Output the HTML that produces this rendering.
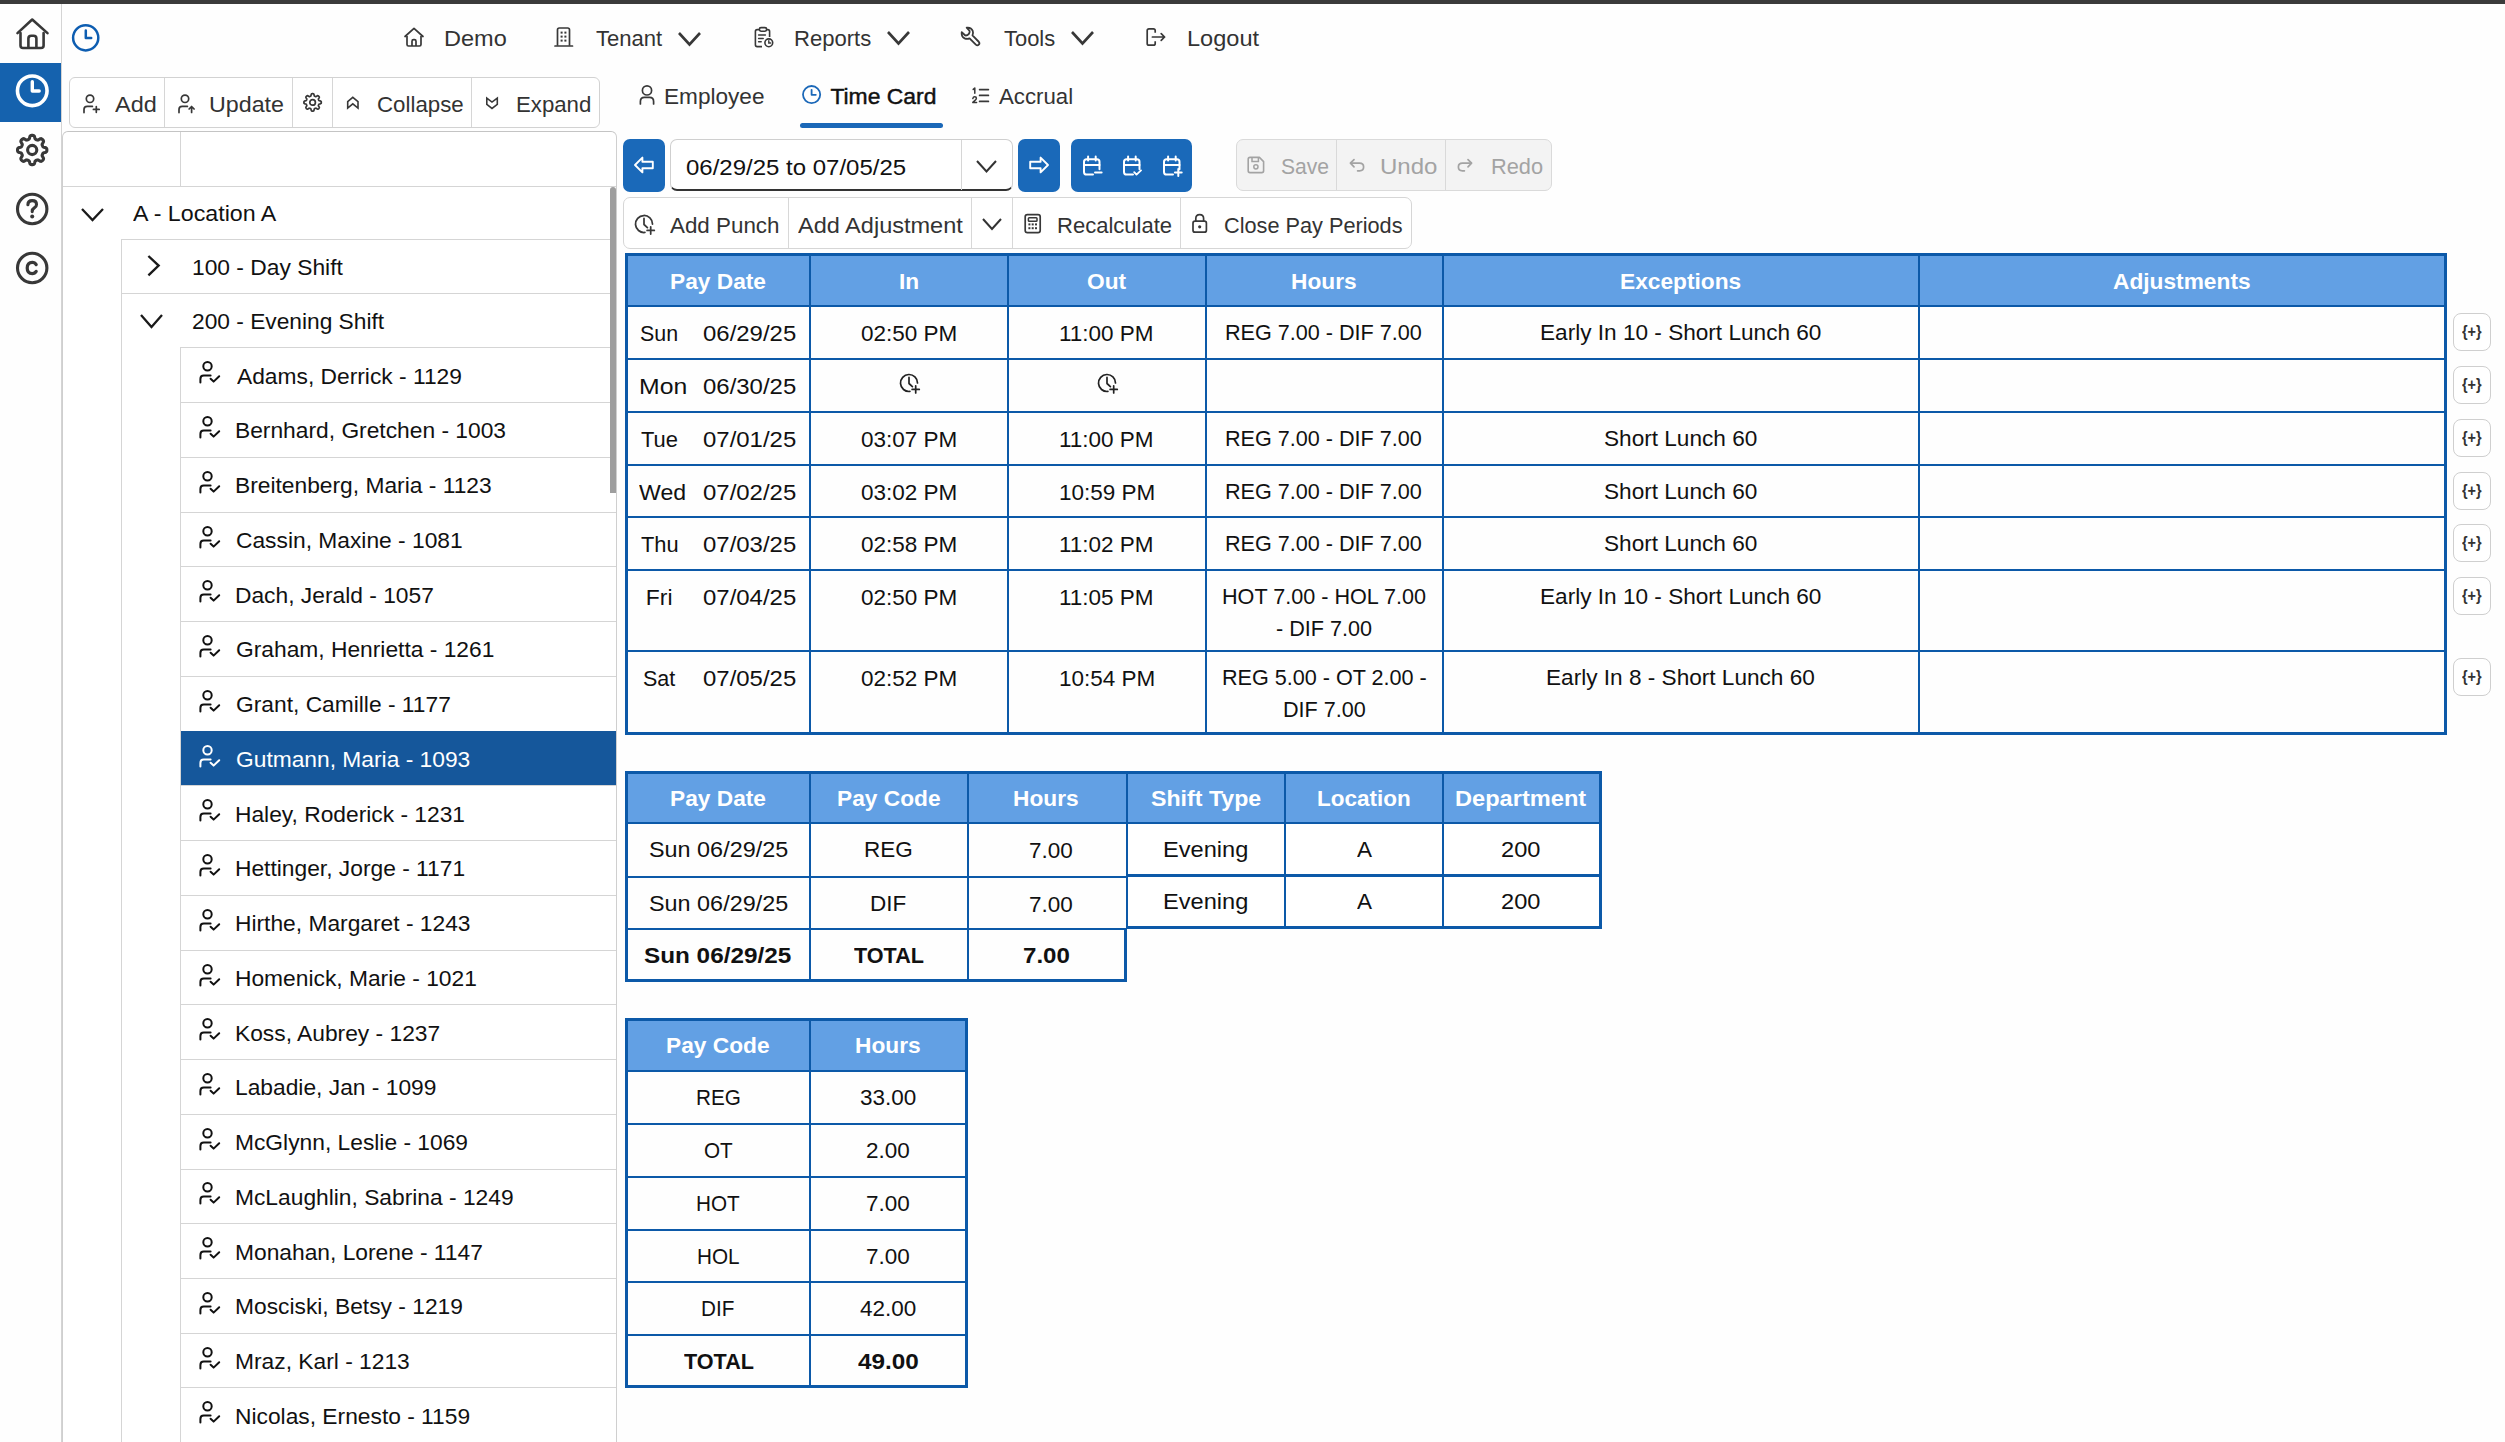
<!DOCTYPE html>
<html><head><meta charset="utf-8"><style>
html,body{margin:0;padding:0;width:2505px;height:1442px;overflow:hidden;background:#fefefe;font-family:"Liberation Sans", sans-serif;}
body{position:relative;}
</style></head><body>
<div style="position:absolute;left:0px;top:0px;width:2505px;height:4px;background:#3b3b3b;"></div>
<div style="position:absolute;left:61px;top:4px;width:1px;height:1438px;background:#d4d4d4;"></div>
<div style="position:absolute;left:0px;top:63px;width:61px;height:59px;background:#1562ae;"></div>
<svg style="position:absolute;left:14px;top:15px;" width="36" height="36" viewBox="0 0 36 36" fill="none"><path d="M3.5 18.1 L18.2 4.5 L33.5 18.1" stroke="#383838" stroke-width="2.6" stroke-linecap="round" stroke-linejoin="round"/><path d="M6.5 18 V30.5 Q6.5 33 9 33 H27 Q29.6 33 29.6 30.5 V18" stroke="#383838" stroke-width="2.6" stroke-linecap="round" stroke-linejoin="round"/><path d="M14.4 33 V23.5 Q14.4 20.7 17.2 20.7 H19.6 Q22.4 20.7 22.4 23.5 V33" stroke="#383838" stroke-width="2.6" stroke-linejoin="round"/></svg>
<svg style="position:absolute;left:14px;top:73px;" width="36" height="36" viewBox="0 0 36 36" fill="none"><circle cx="18.25" cy="17.8" r="14.8" stroke="#fff" stroke-width="3.6"/><path d="M18.3 8.8 V18 H25.2" stroke="#fff" stroke-width="3.4" stroke-linecap="round" stroke-linejoin="round"/></svg>
<svg style="position:absolute;left:14px;top:132px;" width="36" height="36" viewBox="0 0 36 36" fill="none"><path d="M32.85 18.00 L32.83 18.57 L32.75 19.15 L32.54 19.70 L31.99 20.18 L30.85 20.52 L29.71 20.76 L29.13 21.08 L28.86 21.46 L28.67 21.86 L28.50 22.27 L28.34 22.67 L28.18 23.09 L28.11 23.55 L28.29 24.19 L28.93 25.17 L29.49 26.21 L29.54 26.94 L29.30 27.48 L28.95 27.94 L28.56 28.36 L28.14 28.75 L27.68 29.10 L27.14 29.34 L26.41 29.29 L25.37 28.73 L24.39 28.09 L23.75 27.91 L23.29 27.98 L22.87 28.14 L22.47 28.30 L22.06 28.47 L21.66 28.66 L21.28 28.93 L20.96 29.51 L20.72 30.65 L20.38 31.79 L19.90 32.34 L19.35 32.55 L18.77 32.63 L18.20 32.65 L17.63 32.63 L17.05 32.55 L16.50 32.34 L16.02 31.79 L15.68 30.65 L15.44 29.51 L15.12 28.93 L14.74 28.66 L14.34 28.47 L13.93 28.30 L13.53 28.14 L13.11 27.98 L12.65 27.91 L12.01 28.09 L11.03 28.73 L9.99 29.29 L9.26 29.34 L8.72 29.10 L8.26 28.75 L7.84 28.36 L7.45 27.94 L7.10 27.48 L6.86 26.94 L6.91 26.21 L7.47 25.17 L8.11 24.19 L8.29 23.55 L8.22 23.09 L8.06 22.67 L7.90 22.27 L7.73 21.86 L7.54 21.46 L7.27 21.08 L6.69 20.76 L5.55 20.52 L4.41 20.18 L3.86 19.70 L3.65 19.15 L3.57 18.57 L3.55 18.00 L3.57 17.43 L3.65 16.85 L3.86 16.30 L4.41 15.82 L5.55 15.48 L6.69 15.24 L7.27 14.92 L7.54 14.54 L7.73 14.14 L7.90 13.73 L8.06 13.33 L8.22 12.91 L8.29 12.45 L8.11 11.81 L7.47 10.83 L6.91 9.79 L6.86 9.06 L7.10 8.52 L7.45 8.06 L7.84 7.64 L8.26 7.25 L8.72 6.90 L9.26 6.66 L9.99 6.71 L11.03 7.27 L12.01 7.91 L12.65 8.09 L13.11 8.02 L13.53 7.86 L13.93 7.70 L14.34 7.53 L14.74 7.34 L15.12 7.07 L15.44 6.49 L15.68 5.35 L16.02 4.21 L16.50 3.66 L17.05 3.45 L17.63 3.37 L18.20 3.35 L18.77 3.37 L19.35 3.45 L19.90 3.66 L20.38 4.21 L20.72 5.35 L20.96 6.49 L21.28 7.07 L21.66 7.34 L22.06 7.53 L22.47 7.70 L22.87 7.86 L23.29 8.02 L23.75 8.09 L24.39 7.91 L25.37 7.27 L26.41 6.71 L27.14 6.66 L27.68 6.90 L28.14 7.25 L28.56 7.64 L28.95 8.06 L29.30 8.52 L29.54 9.06 L29.49 9.79 L28.93 10.83 L28.29 11.81 L28.11 12.45 L28.18 12.91 L28.34 13.33 L28.50 13.73 L28.67 14.14 L28.86 14.54 L29.13 14.92 L29.71 15.24 L30.85 15.48 L31.99 15.82 L32.54 16.30 L32.75 16.85 L32.83 17.43 Z" stroke="#383838" stroke-width="3.1" stroke-linejoin="round"/><circle cx="18.2" cy="18" r="4.6" stroke="#383838" stroke-width="3.1"/></svg>
<svg style="position:absolute;left:14px;top:191px;" width="36" height="36" viewBox="0 0 36 36" fill="none"><circle cx="18.2" cy="18" r="14.7" stroke="#383838" stroke-width="3.1"/><path d="M13.9 13.8 Q13.9 9.6 18.2 9.6 Q22.5 9.6 22.5 13.4 Q22.5 15.6 20.3 16.9 Q18.2 18.1 18.2 20.6" stroke="#383838" stroke-width="3.1" stroke-linecap="round" fill="none"/><circle cx="18.2" cy="25.4" r="2" fill="#383838"/></svg>
<svg style="position:absolute;left:14px;top:250px;" width="36" height="36" viewBox="0 0 36 36" fill="none"><circle cx="18.2" cy="18" r="14.7" stroke="#383838" stroke-width="3.1"/><path d="M22.2 14.6 Q20.9 12.4 18.3 12.4 Q13.2 12.4 13.2 18 Q13.2 23.6 18.3 23.6 Q20.9 23.6 22.2 21.4" stroke="#383838" stroke-width="3.2" stroke-linecap="round" fill="none"/></svg>
<svg style="position:absolute;left:70px;top:23px;" width="32" height="32" viewBox="0 0 32 32" fill="none"><circle cx="15.7" cy="14.8" r="12.6" stroke="#0d5db1" stroke-width="2.5"/><path d="M15.8 7.6 V15 H21.2" stroke="#0d5db1" stroke-width="2.5" stroke-linecap="round" stroke-linejoin="round"/></svg>
<svg style="position:absolute;left:402px;top:25px;" width="24" height="24" viewBox="0 0 24 24" fill="none"><path d="M3 11.5 L12 3.3 L21 11.5" stroke="#383838" stroke-width="1.7" stroke-linecap="round" stroke-linejoin="round"/><path d="M5 11 V19.5 Q5 21 6.5 21 H17.5 Q19 21 19 19.5 V11" stroke="#383838" stroke-width="1.7" stroke-linejoin="round"/><path d="M10 21 V16.2 Q10 14.6 11.6 14.6 H12.4 Q14 14.6 14 16.2 V21" stroke="#383838" stroke-width="1.7"/></svg>
<div style="position:absolute;left:444.34px;top:26.63px;font-size:22.9px;line-height:22.9px;font-weight:400;color:#333;white-space:nowrap;transform:scaleX(1.0276);transform-origin:0 0;">Demo</div>
<svg style="position:absolute;left:552px;top:25px;" width="24" height="24" viewBox="0 0 24 24" fill="none"><path d="M5.5 20.8 V4.8 Q5.5 3 7.3 3 H15.7 Q17.5 3 17.5 4.8 V20.8" stroke="#383838" stroke-width="1.7"/><path d="M3 21 H20.5" stroke="#383838" stroke-width="1.7" stroke-linecap="round"/><rect x="8.6" y="6.6" width="2" height="2" fill="#383838"/><rect x="8.6" y="10.6" width="2" height="2" fill="#383838"/><rect x="8.6" y="14.6" width="2" height="2" fill="#383838"/><rect x="12.4" y="6.6" width="2" height="2" fill="#383838"/><rect x="12.4" y="10.6" width="2" height="2" fill="#383838"/><rect x="12.4" y="14.6" width="2" height="2" fill="#383838"/></svg>
<div style="position:absolute;left:595.50px;top:26.63px;font-size:22.9px;line-height:22.9px;font-weight:400;color:#333;white-space:nowrap;transform:scaleX(0.9638);transform-origin:0 0;">Tenant</div>
<svg style="position:absolute;left:677px;top:31px;" width="25" height="15.5" viewBox="0 0 25 15.5" fill="none"><path d="M2 2 L12.50 13.5 L23 2" stroke="#383838" stroke-width="2.6" stroke-linecap="butt" stroke-linejoin="miter"/></svg>
<svg style="position:absolute;left:751px;top:25px;" width="26" height="26" viewBox="0 0 26 26" fill="none"><path d="M9 4.6 H6.2 Q4.4 4.6 4.4 6.4 V19.8 Q4.4 21.6 6.2 21.6 H11" stroke="#383838" stroke-width="1.6"/><path d="M15 4.6 H16.8 Q18.6 4.6 18.6 6.4 V12" stroke="#383838" stroke-width="1.6"/><rect x="8.4" y="2.6" width="7.2" height="3.6" rx="1.6" stroke="#383838" stroke-width="1.6"/><path d="M7.6 10 H14.4 M7.6 13.4 H12.2 M7.6 16.8 H10.2" stroke="#383838" stroke-width="1.5" stroke-linecap="round"/><circle cx="17.8" cy="17.8" r="3.9" stroke="#383838" stroke-width="1.6"/><path d="M17.8 15.8 V18 H19.6" stroke="#383838" stroke-width="1.4" stroke-linecap="round"/></svg>
<div style="position:absolute;left:793.87px;top:26.63px;font-size:22.9px;line-height:22.9px;font-weight:400;color:#333;white-space:nowrap;transform:scaleX(0.9641);transform-origin:0 0;">Reports</div>
<svg style="position:absolute;left:886px;top:30px;" width="25" height="15.5" viewBox="0 0 25 15.5" fill="none"><path d="M2 2 L12.50 13.5 L23 2" stroke="#383838" stroke-width="2.6" stroke-linecap="butt" stroke-linejoin="miter"/></svg>
<svg style="position:absolute;left:958px;top:23px;" width="28" height="28" viewBox="0 0 28 28" fill="none"><path d="M14.6 3.6 Q10.6 3 9.2 6.4 Q8.4 8.6 9.4 10.6 L3.8 16.2 Q2.6 17.6 3.8 18.8 Q5 20 6.4 18.8 L12 13.2 Q14.2 14.2 16.4 13.2 Q19.6 11.6 19 7.6 L15.8 10.6 Q14 10.8 12.6 9.2 Q11.6 7.6 12 6.4 Z" stroke="#383838" stroke-width="1.6" stroke-linejoin="round" transform="translate(25,0.6) scale(-1.12,1.12)"/></svg>
<div style="position:absolute;left:1004.00px;top:26.63px;font-size:22.9px;line-height:22.9px;font-weight:400;color:#333;white-space:nowrap;transform:scaleX(0.9566);transform-origin:0 0;">Tools</div>
<svg style="position:absolute;left:1070px;top:30px;" width="25" height="15.5" viewBox="0 0 25 15.5" fill="none"><path d="M2 2 L12.50 13.5 L23 2" stroke="#383838" stroke-width="2.6" stroke-linecap="butt" stroke-linejoin="miter"/></svg>
<svg style="position:absolute;left:1143px;top:25px;" width="26" height="24" viewBox="0 0 26 24" fill="none"><path d="M12.2 7.8 V5.6 Q12.2 3.8 10.4 3.8 H6 Q4.2 3.8 4.2 5.6 V18.4 Q4.2 20.2 6 20.2 H10.4 Q12.2 20.2 12.2 18.4 V16.2" stroke="#383838" stroke-width="1.7"/><path d="M9.4 12 H21.6 M18.2 8.6 L21.6 12 L18.2 15.4" stroke="#383838" stroke-width="1.7" stroke-linecap="round" stroke-linejoin="round"/></svg>
<div style="position:absolute;left:1186.94px;top:26.63px;font-size:22.9px;line-height:22.9px;font-weight:400;color:#333;white-space:nowrap;transform:scaleX(1.0294);transform-origin:0 0;">Logout</div>
<div style="position:absolute;left:69px;top:77px;width:531px;height:51px;box-sizing:border-box;border:1px solid #d2d2d2;background:#fff;border-radius:6px;"></div>
<div style="position:absolute;left:164px;top:78px;width:1px;height:49px;background:#d6d6d6;"></div>
<div style="position:absolute;left:292px;top:78px;width:1px;height:49px;background:#d6d6d6;"></div>
<div style="position:absolute;left:332px;top:78px;width:1px;height:49px;background:#d6d6d6;"></div>
<div style="position:absolute;left:471px;top:78px;width:1px;height:49px;background:#d6d6d6;"></div>
<svg style="position:absolute;left:80px;top:91px;" width="24" height="24" viewBox="0 0 24 24" fill="none"><circle cx="10.0" cy="7.8" r="3.7" stroke="#383838" stroke-width="1.7"/><path d="M4.0 21.599999999999998 V18.599999999999998 Q4.0 15.399999999999999 7.2 15.399999999999999 H12.399999999999999" stroke="#383838" stroke-width="1.7" stroke-linecap="round"/><path d="M13.4 18.4 H19.2 M16.3 15.5 V21.3" stroke="#383838" stroke-width="1.7" stroke-linecap="round"/></svg>
<div style="position:absolute;left:115.00px;top:93.13px;font-size:22.9px;line-height:22.9px;font-weight:400;color:#333;white-space:nowrap;transform:scaleX(1.0256);transform-origin:0 0;">Add</div>
<svg style="position:absolute;left:175px;top:91px;" width="24" height="24" viewBox="0 0 24 24" fill="none"><circle cx="10.0" cy="7.8" r="3.7" stroke="#383838" stroke-width="1.7"/><path d="M4.0 21.599999999999998 V18.599999999999998 Q4.0 15.399999999999999 7.2 15.399999999999999 H12.399999999999999" stroke="#383838" stroke-width="1.7" stroke-linecap="round"/><path d="M16.6 21.4 V15.6 M14.1 18 L16.6 15.5 L19.1 18" stroke="#383838" stroke-width="1.7" stroke-linecap="round" stroke-linejoin="round"/></svg>
<div style="position:absolute;left:209.47px;top:93.13px;font-size:22.9px;line-height:22.9px;font-weight:400;color:#333;white-space:nowrap;transform:scaleX(1.0155);transform-origin:0 0;">Update</div>
<svg style="position:absolute;left:301px;top:91px;" width="23" height="23" viewBox="0 0 23 23" fill="none"><path d="M20.30 11.40 L20.29 11.74 L20.24 12.08 L20.11 12.41 L19.76 12.69 L19.05 12.88 L18.34 13.02 L17.98 13.20 L17.82 13.42 L17.70 13.65 L17.61 13.89 L17.51 14.12 L17.42 14.37 L17.39 14.64 L17.51 15.02 L17.92 15.62 L18.29 16.26 L18.33 16.71 L18.19 17.03 L17.98 17.30 L17.75 17.55 L17.50 17.78 L17.23 17.99 L16.91 18.13 L16.46 18.09 L15.82 17.72 L15.22 17.31 L14.84 17.19 L14.57 17.22 L14.32 17.31 L14.09 17.41 L13.85 17.50 L13.62 17.62 L13.40 17.78 L13.22 18.14 L13.08 18.85 L12.89 19.56 L12.61 19.91 L12.28 20.04 L11.94 20.09 L11.60 20.10 L11.26 20.09 L10.92 20.04 L10.59 19.91 L10.31 19.56 L10.12 18.85 L9.98 18.14 L9.80 17.78 L9.58 17.62 L9.35 17.50 L9.11 17.41 L8.88 17.31 L8.63 17.22 L8.36 17.19 L7.98 17.31 L7.38 17.72 L6.74 18.09 L6.29 18.13 L5.97 17.99 L5.70 17.78 L5.45 17.55 L5.22 17.30 L5.01 17.03 L4.87 16.71 L4.91 16.26 L5.28 15.62 L5.69 15.02 L5.81 14.64 L5.78 14.37 L5.69 14.12 L5.59 13.89 L5.50 13.65 L5.38 13.42 L5.22 13.20 L4.86 13.02 L4.15 12.88 L3.44 12.69 L3.09 12.41 L2.96 12.08 L2.91 11.74 L2.90 11.40 L2.91 11.06 L2.96 10.72 L3.09 10.39 L3.44 10.11 L4.15 9.92 L4.86 9.78 L5.22 9.60 L5.38 9.38 L5.50 9.15 L5.59 8.91 L5.69 8.68 L5.78 8.43 L5.81 8.16 L5.69 7.78 L5.28 7.18 L4.91 6.54 L4.87 6.09 L5.01 5.77 L5.22 5.50 L5.45 5.25 L5.70 5.02 L5.97 4.81 L6.29 4.67 L6.74 4.71 L7.38 5.08 L7.98 5.49 L8.36 5.61 L8.63 5.58 L8.88 5.49 L9.11 5.39 L9.35 5.30 L9.58 5.18 L9.80 5.02 L9.98 4.66 L10.12 3.95 L10.31 3.24 L10.59 2.89 L10.92 2.76 L11.26 2.71 L11.60 2.70 L11.94 2.71 L12.28 2.76 L12.61 2.89 L12.89 3.24 L13.08 3.95 L13.22 4.66 L13.40 5.02 L13.62 5.18 L13.85 5.30 L14.09 5.39 L14.32 5.49 L14.57 5.58 L14.84 5.61 L15.22 5.49 L15.82 5.08 L16.46 4.71 L16.91 4.67 L17.23 4.81 L17.50 5.02 L17.75 5.25 L17.98 5.50 L18.19 5.77 L18.33 6.09 L18.29 6.54 L17.92 7.18 L17.51 7.78 L17.39 8.16 L17.42 8.43 L17.51 8.68 L17.61 8.91 L17.70 9.15 L17.82 9.38 L17.98 9.60 L18.34 9.78 L19.05 9.92 L19.76 10.11 L20.11 10.39 L20.24 10.72 L20.29 11.06 Z" stroke="#383838" stroke-width="1.7" stroke-linejoin="round"/><circle cx="11.6" cy="11.4" r="2.8" stroke="#383838" stroke-width="1.7"/></svg>
<svg style="position:absolute;left:344px;top:94px;" width="18" height="18" viewBox="0 0 18 18" fill="none"><path d="M3.7 14 V7.6 L8.8 3.4 L14 7.6 V14 L8.8 9.8 Z" stroke="#383838" stroke-width="1.6" stroke-linejoin="miter"/></svg>
<div style="position:absolute;left:377.43px;top:93.13px;font-size:22.9px;line-height:22.9px;font-weight:400;color:#333;white-space:nowrap;transform:scaleX(0.9736);transform-origin:0 0;">Collapse</div>
<svg style="position:absolute;left:483px;top:94px;" width="18" height="18" viewBox="0 0 18 18" fill="none"><path d="M3.8 4.1 V10.4 L9 14.5 L14.3 10.4 V4.1 L9 8.1 Z" stroke="#383838" stroke-width="1.6" stroke-linejoin="miter"/></svg>
<div style="position:absolute;left:516.26px;top:93.13px;font-size:22.9px;line-height:22.9px;font-weight:400;color:#333;white-space:nowrap;transform:scaleX(0.9703);transform-origin:0 0;">Expand</div>
<svg style="position:absolute;left:636px;top:83px;" width="22" height="24" viewBox="0 0 22 24" fill="none"><circle cx="11" cy="7.4" r="4.6" stroke="#383838" stroke-width="1.7"/><path d="M4.4 21 V18.6 Q4.4 14.4 8.4 14.4 H13.6 Q17.6 14.4 17.6 18.6 V21" stroke="#383838" stroke-width="1.7" stroke-linecap="round"/></svg>
<div style="position:absolute;left:663.63px;top:84.73px;font-size:22.9px;line-height:22.9px;font-weight:400;color:#333;white-space:nowrap;transform:scaleX(0.9869);transform-origin:0 0;">Employee</div>
<svg style="position:absolute;left:799px;top:82px;" width="26" height="26" viewBox="0 0 26 26" fill="none"><circle cx="12.6" cy="12.6" r="8.6" stroke="#1b68b8" stroke-width="1.8"/><path d="M12.6 7.8 V12.8 H16.8" stroke="#1b68b8" stroke-width="1.8" stroke-linecap="round" stroke-linejoin="round"/></svg>
<div style="position:absolute;left:0;top:0;-webkit-text-stroke:0.45px #111">
<div style="position:absolute;left:830.40px;top:84.73px;font-size:22.9px;line-height:22.9px;font-weight:400;color:#111;white-space:nowrap;">Time Card</div>
</div>
<div style="position:absolute;left:800px;top:123px;width:143px;height:5px;background:#1b68b8;border-radius:3px;"></div>
<svg style="position:absolute;left:969px;top:83px;" width="24" height="24" viewBox="0 0 24 24" fill="none"><path d="M4.2 6.4 L5.8 5 V10.2" stroke="#383838" stroke-width="1.5" stroke-linecap="round" stroke-linejoin="round"/><path d="M3.8 15.6 Q4.2 13.8 5.8 13.8 Q7.4 13.8 7.4 15.2 Q7.4 16.4 5.8 17.6 L3.8 19.4 H7.6" stroke="#383838" stroke-width="1.5" stroke-linecap="round" stroke-linejoin="round"/><path d="M10.6 6.6 H19.4 M10.6 12.4 H19.4 M10.6 18.4 H19.4" stroke="#383838" stroke-width="1.7" stroke-linecap="round"/></svg>
<div style="position:absolute;left:999.40px;top:84.73px;font-size:22.9px;line-height:22.9px;font-weight:400;color:#333;white-space:nowrap;transform:scaleX(0.9707);transform-origin:0 0;">Accrual</div>
<div style="position:absolute;left:623px;top:139px;width:42px;height:53px;background:#1a69b9;border-radius:7px;"></div>
<svg style="position:absolute;left:631px;top:152px;" width="26" height="26" viewBox="0 0 26 26" fill="none"><path d="M4 13 L11.4 5.6 V9.8 H21.8 V16.2 H11.4 V20.4 Z" stroke="#fff" stroke-width="1.9" stroke-linejoin="round"/></svg>
<div style="position:absolute;left:670px;top:139px;width:343px;height:52px;box-sizing:border-box;border:1px solid #cfcfcf;background:#fff;border-radius:7px;border-bottom:2px solid #333;"></div>
<div style="position:absolute;left:961px;top:140px;width:1px;height:50px;background:#d6d6d6;"></div>
<div style="position:absolute;left:686.45px;top:155.53px;font-size:22.9px;line-height:22.9px;font-weight:400;color:#111;white-space:nowrap;transform:scaleX(1.0481);transform-origin:0 0;">06/29/25 to 07/05/25</div>
<svg style="position:absolute;left:975px;top:159px;" width="23" height="14.5" viewBox="0 0 23 14.5" fill="none"><path d="M2 2 L11.50 12.5 L21 2" stroke="#333" stroke-width="2.0" stroke-linecap="butt" stroke-linejoin="miter"/></svg>
<div style="position:absolute;left:1018px;top:139px;width:42px;height:53px;background:#1a69b9;border-radius:7px;"></div>
<svg style="position:absolute;left:1026px;top:152px;" width="26" height="26" viewBox="0 0 26 26" fill="none"><path d="M22 13 L14.6 5.6 V9.8 H4.2 V16.2 H14.6 V20.4 Z" stroke="#fff" stroke-width="1.9" stroke-linejoin="round"/></svg>
<div style="position:absolute;left:1071px;top:139px;width:121px;height:53px;background:#1a69b9;border-radius:7px;"></div>
<svg style="position:absolute;left:1081px;top:155px;" width="24" height="24" viewBox="0 0 24 24" fill="none"><path d="M12 19.5 H5.6 Q3 19.5 3 16.9 V6.8 Q3 4.2 5.6 4.2 H15.9 Q18.5 4.2 18.5 6.8 V14.3" stroke="#fff" stroke-width="2" stroke-linejoin="round" stroke-linecap="round"/><path d="M3 10 H18.5 M7.1 1.6 V5.6 M14.7 1.6 V5.6" stroke="#fff" stroke-width="2" stroke-linecap="round"/><path d="M14 17.5 H20.6" stroke="#fff" stroke-width="2" stroke-linecap="round"/></svg>
<svg style="position:absolute;left:1121px;top:155px;" width="24" height="24" viewBox="0 0 24 24" fill="none"><path d="M12 19.5 H5.6 Q3 19.5 3 16.9 V6.8 Q3 4.2 5.6 4.2 H15.9 Q18.5 4.2 18.5 6.8 V14.3" stroke="#fff" stroke-width="2" stroke-linejoin="round" stroke-linecap="round"/><path d="M3 10 H18.5 M7.1 1.6 V5.6 M14.7 1.6 V5.6" stroke="#fff" stroke-width="2" stroke-linecap="round"/><path d="M13.2 17.2 L15.5 19.6 L20 15.4" stroke="#fff" stroke-width="1.9" stroke-linecap="round" stroke-linejoin="round"/></svg>
<svg style="position:absolute;left:1161px;top:155px;" width="24" height="24" viewBox="0 0 24 24" fill="none"><path d="M12 19.5 H5.6 Q3 19.5 3 16.9 V6.8 Q3 4.2 5.6 4.2 H15.9 Q18.5 4.2 18.5 6.8 V14.3" stroke="#fff" stroke-width="2" stroke-linejoin="round" stroke-linecap="round"/><path d="M3 10 H18.5 M7.1 1.6 V5.6 M14.7 1.6 V5.6" stroke="#fff" stroke-width="2" stroke-linecap="round"/><path d="M13.9 17.5 H20.7 M17.3 14.1 V20.9" stroke="#fff" stroke-width="2" stroke-linecap="round"/></svg>
<div style="position:absolute;left:1236px;top:139px;width:316px;height:52px;box-sizing:border-box;border:1px solid #dadada;background:#f3f3f3;border-radius:7px;"></div>
<div style="position:absolute;left:1336px;top:140px;width:1px;height:50px;background:#d9d9d9;"></div>
<div style="position:absolute;left:1445px;top:140px;width:1px;height:50px;background:#d9d9d9;"></div>
<svg style="position:absolute;left:1245px;top:154px;" width="22" height="22" viewBox="0 0 22 22" fill="none"><path d="M5 3.4 H14.4 L18.6 7.6 V16.8 Q18.6 18.6 16.8 18.6 H5 Q3.2 18.6 3.2 16.8 V5.2 Q3.2 3.4 5 3.4 Z" stroke="#a3a3a3" stroke-width="1.6" stroke-linejoin="round"/><path d="M7 3.6 V7.4 H13.4 V3.6" stroke="#a3a3a3" stroke-width="1.5"/><circle cx="10.9" cy="12.8" r="2.1" stroke="#a3a3a3" stroke-width="1.5"/></svg>
<div style="position:absolute;left:1281.08px;top:155.34px;font-size:22.9px;line-height:22.9px;font-weight:400;color:#a3a3a3;white-space:nowrap;transform:scaleX(0.9220);transform-origin:0 0;">Save</div>
<svg style="position:absolute;left:1346px;top:154.5px;" width="22" height="22" viewBox="0 0 22 22" fill="none"><path d="M8 4.6 L4.4 8.2 L8 11.8" stroke="#a3a3a3" stroke-width="1.7" stroke-linecap="round" stroke-linejoin="round"/><path d="M4.8 8.2 H13.6 Q17.6 8.2 17.6 12 Q17.6 15.8 13.6 15.8 H11.6" stroke="#a3a3a3" stroke-width="1.7" stroke-linecap="round"/></svg>
<div style="position:absolute;left:1380.30px;top:155.34px;font-size:22.9px;line-height:22.9px;font-weight:400;color:#a3a3a3;white-space:nowrap;transform:scaleX(1.0500);transform-origin:0 0;">Undo</div>
<svg style="position:absolute;left:1454px;top:154.5px;" width="22" height="22" viewBox="0 0 22 22" fill="none"><path d="M14 4.6 L17.6 8.2 L14 11.8" stroke="#a3a3a3" stroke-width="1.7" stroke-linecap="round" stroke-linejoin="round"/><path d="M17.2 8.2 H8.4 Q4.4 8.2 4.4 12 Q4.4 15.8 8.4 15.8 H10.4" stroke="#a3a3a3" stroke-width="1.7" stroke-linecap="round"/></svg>
<div style="position:absolute;left:1490.50px;top:155.34px;font-size:22.9px;line-height:22.9px;font-weight:400;color:#a3a3a3;white-space:nowrap;transform:scaleX(0.9519);transform-origin:0 0;">Redo</div>
<div style="position:absolute;left:623px;top:197px;width:789px;height:52px;box-sizing:border-box;border:1px solid #d6d6d6;background:#fff;border-radius:7px;"></div>
<div style="position:absolute;left:788px;top:198px;width:1px;height:50px;background:#d8d8d8;"></div>
<div style="position:absolute;left:971px;top:198px;width:1px;height:50px;background:#d8d8d8;"></div>
<div style="position:absolute;left:1012px;top:198px;width:1px;height:50px;background:#d8d8d8;"></div>
<div style="position:absolute;left:1180px;top:198px;width:1px;height:50px;background:#d8d8d8;"></div>
<svg style="position:absolute;left:632px;top:212px;" width="24" height="24" viewBox="0 0 24 24" fill="none"><path d="M20.5 12 A8.5 8.5 0 1 0 12.9 20.45" stroke="#383838" stroke-width="1.75" stroke-linecap="round"/><path d="M12 6.4 V12.5 L15.4 15.6" stroke="#383838" stroke-width="1.75" stroke-linecap="round" stroke-linejoin="round"/><path d="M15.1 18.4 H22.3 M18.7 14.8 V22" stroke="#383838" stroke-width="1.75" stroke-linecap="round"/></svg>
<div style="position:absolute;left:670.30px;top:213.84px;font-size:22.9px;line-height:22.9px;font-weight:400;color:#333;white-space:nowrap;transform:scaleX(0.9775);transform-origin:0 0;">Add Punch</div>
<div style="position:absolute;left:798.00px;top:213.84px;font-size:22.9px;line-height:22.9px;font-weight:400;color:#333;white-space:nowrap;transform:scaleX(1.0281);transform-origin:0 0;">Add Adjustment</div>
<svg style="position:absolute;left:981px;top:217px;" width="22" height="14" viewBox="0 0 22 14" fill="none"><path d="M2 2 L11.00 12 L20 2" stroke="#333" stroke-width="2.0" stroke-linecap="butt" stroke-linejoin="miter"/></svg>
<svg style="position:absolute;left:1021px;top:211px;" width="24" height="24" viewBox="0 0 24 24" fill="none"><rect x="4.2" y="3.6" width="15" height="18" rx="2.2" stroke="#383838" stroke-width="1.7"/><rect x="7.4" y="6.8" width="8.6" height="3.4" rx="0.8" stroke="#383838" stroke-width="1.5"/><rect x="7.4" y="12.4" width="2" height="2" fill="#383838"/><rect x="7.4" y="16.2" width="2" height="2" fill="#383838"/><rect x="10.7" y="12.4" width="2" height="2" fill="#383838"/><rect x="10.7" y="16.2" width="2" height="2" fill="#383838"/><rect x="14" y="12.4" width="2" height="2" fill="#383838"/><rect x="14" y="16.2" width="2" height="2" fill="#383838"/></svg>
<div style="position:absolute;left:1056.78px;top:213.84px;font-size:22.9px;line-height:22.9px;font-weight:400;color:#333;white-space:nowrap;transform:scaleX(0.9624);transform-origin:0 0;">Recalculate</div>
<svg style="position:absolute;left:1189px;top:211px;" width="22" height="24" viewBox="0 0 22 24" fill="none"><rect x="4" y="10.2" width="13.4" height="11" rx="2" stroke="#383838" stroke-width="1.7"/><path d="M6.8 10.2 V7.6 Q6.8 3.6 10.7 3.6 Q14.6 3.6 14.6 7.6 V10.2" stroke="#383838" stroke-width="1.7"/><circle cx="10.7" cy="15.8" r="1.6" fill="#383838"/></svg>
<div style="position:absolute;left:1224.15px;top:213.84px;font-size:22.9px;line-height:22.9px;font-weight:400;color:#333;white-space:nowrap;transform:scaleX(0.9481);transform-origin:0 0;">Close Pay Periods</div>
<div style="position:absolute;left:62px;top:131px;width:555px;height:1330px;box-sizing:border-box;border:1px solid #cfcfcf;border-top:1.5px solid #c4c4c4;border-radius:6px 6px 0 0;background:#fff"></div>
<div style="position:absolute;left:63px;top:186px;width:553px;height:1px;background:#d5d5d5;"></div>
<div style="position:absolute;left:180px;top:132px;width:1px;height:54px;background:#d5d5d5;"></div>
<svg style="position:absolute;left:80px;top:207px;" width="25" height="15" viewBox="0 0 25 15" fill="none"><path d="M2 2 L12.50 13 L23 2" stroke="#1a1a1a" stroke-width="2.3" stroke-linecap="butt" stroke-linejoin="miter"/></svg>
<div style="position:absolute;left:133.40px;top:202.03px;font-size:22.9px;line-height:22.9px;font-weight:400;color:#111;white-space:nowrap;transform:scaleX(1.0149);transform-origin:0 0;">A - Location A</div>
<div style="position:absolute;left:121px;top:239px;width:495px;height:1px;background:#d5d5d5;"></div>
<div style="position:absolute;left:121px;top:239px;width:1px;height:1203px;background:#d5d5d5;"></div>
<svg style="position:absolute;left:144px;top:253px;" width="20" height="26" viewBox="0 0 20 26" fill="none"><path d="M4.4 3 L14.6 12.6 L4.4 22.4" stroke="#1a1a1a" stroke-width="2.4"/></svg>
<div style="position:absolute;left:191.61px;top:255.64px;font-size:22.9px;line-height:22.9px;font-weight:400;color:#111;white-space:nowrap;transform:scaleX(0.9960);transform-origin:0 0;">100 - Day Shift</div>
<div style="position:absolute;left:122px;top:293px;width:494px;height:1px;background:#d5d5d5;"></div>
<svg style="position:absolute;left:139px;top:313px;" width="25" height="16" viewBox="0 0 25 16" fill="none"><path d="M2 2 L12.50 14 L23 2" stroke="#1a1a1a" stroke-width="2.3" stroke-linecap="butt" stroke-linejoin="miter"/></svg>
<div style="position:absolute;left:191.61px;top:309.94px;font-size:22.9px;line-height:22.9px;font-weight:400;color:#111;white-space:nowrap;transform:scaleX(0.9932);transform-origin:0 0;">200 - Evening Shift</div>
<div style="position:absolute;left:180px;top:347px;width:436px;height:1px;background:#d5d5d5;"></div>
<div style="position:absolute;left:180px;top:347px;width:1px;height:1095px;background:#d5d5d5;"></div>
<svg style="position:absolute;left:196px;top:359px;" width="26" height="26" viewBox="0 0 26 26" fill="none"><circle cx="11.5" cy="7.2" r="4.2" stroke="#111" stroke-width="2.0"/><path d="M4.4 23.4 V20 Q4.4 16.6 7.8 16.6 H14.6" stroke="#111" stroke-width="2.0" stroke-linecap="round"/><path d="M14.6 19.8 L17.6 22.6 L23.2 17.2" stroke="#111" stroke-width="2.0" stroke-linecap="round" stroke-linejoin="round"/></svg>
<div style="position:absolute;left:237.10px;top:364.74px;font-size:22.9px;line-height:22.9px;font-weight:400;color:#111;white-space:nowrap;transform:scaleX(0.9953);transform-origin:0 0;">Adams, Derrick - 1129</div>
<div style="position:absolute;left:181px;top:402.14px;width:435px;height:1px;background:#d5d5d5"></div>
<svg style="position:absolute;left:196px;top:414px;" width="26" height="26" viewBox="0 0 26 26" fill="none"><circle cx="11.5" cy="7.2" r="4.2" stroke="#111" stroke-width="2.0"/><path d="M4.4 23.4 V20 Q4.4 16.6 7.8 16.6 H14.6" stroke="#111" stroke-width="2.0" stroke-linecap="round"/><path d="M14.6 19.8 L17.6 22.6 L23.2 17.2" stroke="#111" stroke-width="2.0" stroke-linecap="round" stroke-linejoin="round"/></svg>
<div style="position:absolute;left:235.11px;top:419.48px;font-size:22.9px;line-height:22.9px;font-weight:400;color:#111;white-space:nowrap;transform:scaleX(0.9953);transform-origin:0 0;">Bernhard, Gretchen - 1003</div>
<div style="position:absolute;left:181px;top:456.88px;width:435px;height:1px;background:#d5d5d5"></div>
<svg style="position:absolute;left:196px;top:469px;" width="26" height="26" viewBox="0 0 26 26" fill="none"><circle cx="11.5" cy="7.2" r="4.2" stroke="#111" stroke-width="2.0"/><path d="M4.4 23.4 V20 Q4.4 16.6 7.8 16.6 H14.6" stroke="#111" stroke-width="2.0" stroke-linecap="round"/><path d="M14.6 19.8 L17.6 22.6 L23.2 17.2" stroke="#111" stroke-width="2.0" stroke-linecap="round" stroke-linejoin="round"/></svg>
<div style="position:absolute;left:235.11px;top:474.22px;font-size:22.9px;line-height:22.9px;font-weight:400;color:#111;white-space:nowrap;transform:scaleX(0.9953);transform-origin:0 0;">Breitenberg, Maria - 1123</div>
<div style="position:absolute;left:181px;top:511.62px;width:435px;height:1px;background:#d5d5d5"></div>
<svg style="position:absolute;left:196px;top:524px;" width="26" height="26" viewBox="0 0 26 26" fill="none"><circle cx="11.5" cy="7.2" r="4.2" stroke="#111" stroke-width="2.0"/><path d="M4.4 23.4 V20 Q4.4 16.6 7.8 16.6 H14.6" stroke="#111" stroke-width="2.0" stroke-linecap="round"/><path d="M14.6 19.8 L17.6 22.6 L23.2 17.2" stroke="#111" stroke-width="2.0" stroke-linecap="round" stroke-linejoin="round"/></svg>
<div style="position:absolute;left:236.10px;top:528.95px;font-size:22.9px;line-height:22.9px;font-weight:400;color:#111;white-space:nowrap;transform:scaleX(0.9953);transform-origin:0 0;">Cassin, Maxine - 1081</div>
<div style="position:absolute;left:181px;top:566.36px;width:435px;height:1px;background:#d5d5d5"></div>
<svg style="position:absolute;left:196px;top:578px;" width="26" height="26" viewBox="0 0 26 26" fill="none"><circle cx="11.5" cy="7.2" r="4.2" stroke="#111" stroke-width="2.0"/><path d="M4.4 23.4 V20 Q4.4 16.6 7.8 16.6 H14.6" stroke="#111" stroke-width="2.0" stroke-linecap="round"/><path d="M14.6 19.8 L17.6 22.6 L23.2 17.2" stroke="#111" stroke-width="2.0" stroke-linecap="round" stroke-linejoin="round"/></svg>
<div style="position:absolute;left:235.11px;top:583.69px;font-size:22.9px;line-height:22.9px;font-weight:400;color:#111;white-space:nowrap;transform:scaleX(0.9953);transform-origin:0 0;">Dach, Jerald - 1057</div>
<div style="position:absolute;left:181px;top:621.10px;width:435px;height:1px;background:#d5d5d5"></div>
<svg style="position:absolute;left:196px;top:633px;" width="26" height="26" viewBox="0 0 26 26" fill="none"><circle cx="11.5" cy="7.2" r="4.2" stroke="#111" stroke-width="2.0"/><path d="M4.4 23.4 V20 Q4.4 16.6 7.8 16.6 H14.6" stroke="#111" stroke-width="2.0" stroke-linecap="round"/><path d="M14.6 19.8 L17.6 22.6 L23.2 17.2" stroke="#111" stroke-width="2.0" stroke-linecap="round" stroke-linejoin="round"/></svg>
<div style="position:absolute;left:236.10px;top:638.43px;font-size:22.9px;line-height:22.9px;font-weight:400;color:#111;white-space:nowrap;transform:scaleX(0.9953);transform-origin:0 0;">Graham, Henrietta - 1261</div>
<div style="position:absolute;left:181px;top:675.84px;width:435px;height:1px;background:#d5d5d5"></div>
<svg style="position:absolute;left:196px;top:688px;" width="26" height="26" viewBox="0 0 26 26" fill="none"><circle cx="11.5" cy="7.2" r="4.2" stroke="#111" stroke-width="2.0"/><path d="M4.4 23.4 V20 Q4.4 16.6 7.8 16.6 H14.6" stroke="#111" stroke-width="2.0" stroke-linecap="round"/><path d="M14.6 19.8 L17.6 22.6 L23.2 17.2" stroke="#111" stroke-width="2.0" stroke-linecap="round" stroke-linejoin="round"/></svg>
<div style="position:absolute;left:236.10px;top:693.17px;font-size:22.9px;line-height:22.9px;font-weight:400;color:#111;white-space:nowrap;transform:scaleX(0.9953);transform-origin:0 0;">Grant, Camille - 1177</div>
<div style="position:absolute;left:181px;top:731.18px;width:435px;height:54.34px;background:#15579b"></div>
<svg style="position:absolute;left:196px;top:743px;" width="26" height="26" viewBox="0 0 26 26" fill="none"><circle cx="11.5" cy="7.2" r="4.2" stroke="#fff" stroke-width="2.0"/><path d="M4.4 23.4 V20 Q4.4 16.6 7.8 16.6 H14.6" stroke="#fff" stroke-width="2.0" stroke-linecap="round"/><path d="M14.6 19.8 L17.6 22.6 L23.2 17.2" stroke="#fff" stroke-width="2.0" stroke-linecap="round" stroke-linejoin="round"/></svg>
<div style="position:absolute;left:236.10px;top:747.91px;font-size:22.9px;line-height:22.9px;font-weight:400;color:#fff;white-space:nowrap;transform:scaleX(0.9953);transform-origin:0 0;">Gutmann, Maria - 1093</div>
<div style="position:absolute;left:181px;top:785.32px;width:435px;height:1px;background:#d5d5d5"></div>
<svg style="position:absolute;left:196px;top:797px;" width="26" height="26" viewBox="0 0 26 26" fill="none"><circle cx="11.5" cy="7.2" r="4.2" stroke="#111" stroke-width="2.0"/><path d="M4.4 23.4 V20 Q4.4 16.6 7.8 16.6 H14.6" stroke="#111" stroke-width="2.0" stroke-linecap="round"/><path d="M14.6 19.8 L17.6 22.6 L23.2 17.2" stroke="#111" stroke-width="2.0" stroke-linecap="round" stroke-linejoin="round"/></svg>
<div style="position:absolute;left:235.11px;top:802.65px;font-size:22.9px;line-height:22.9px;font-weight:400;color:#111;white-space:nowrap;transform:scaleX(0.9953);transform-origin:0 0;">Haley, Roderick - 1231</div>
<div style="position:absolute;left:181px;top:840.06px;width:435px;height:1px;background:#d5d5d5"></div>
<svg style="position:absolute;left:196px;top:852px;" width="26" height="26" viewBox="0 0 26 26" fill="none"><circle cx="11.5" cy="7.2" r="4.2" stroke="#111" stroke-width="2.0"/><path d="M4.4 23.4 V20 Q4.4 16.6 7.8 16.6 H14.6" stroke="#111" stroke-width="2.0" stroke-linecap="round"/><path d="M14.6 19.8 L17.6 22.6 L23.2 17.2" stroke="#111" stroke-width="2.0" stroke-linecap="round" stroke-linejoin="round"/></svg>
<div style="position:absolute;left:235.11px;top:857.39px;font-size:22.9px;line-height:22.9px;font-weight:400;color:#111;white-space:nowrap;transform:scaleX(0.9953);transform-origin:0 0;">Hettinger, Jorge - 1171</div>
<div style="position:absolute;left:181px;top:894.80px;width:435px;height:1px;background:#d5d5d5"></div>
<svg style="position:absolute;left:196px;top:907px;" width="26" height="26" viewBox="0 0 26 26" fill="none"><circle cx="11.5" cy="7.2" r="4.2" stroke="#111" stroke-width="2.0"/><path d="M4.4 23.4 V20 Q4.4 16.6 7.8 16.6 H14.6" stroke="#111" stroke-width="2.0" stroke-linecap="round"/><path d="M14.6 19.8 L17.6 22.6 L23.2 17.2" stroke="#111" stroke-width="2.0" stroke-linecap="round" stroke-linejoin="round"/></svg>
<div style="position:absolute;left:235.11px;top:912.13px;font-size:22.9px;line-height:22.9px;font-weight:400;color:#111;white-space:nowrap;transform:scaleX(0.9953);transform-origin:0 0;">Hirthe, Margaret - 1243</div>
<div style="position:absolute;left:181px;top:949.54px;width:435px;height:1px;background:#d5d5d5"></div>
<svg style="position:absolute;left:196px;top:962px;" width="26" height="26" viewBox="0 0 26 26" fill="none"><circle cx="11.5" cy="7.2" r="4.2" stroke="#111" stroke-width="2.0"/><path d="M4.4 23.4 V20 Q4.4 16.6 7.8 16.6 H14.6" stroke="#111" stroke-width="2.0" stroke-linecap="round"/><path d="M14.6 19.8 L17.6 22.6 L23.2 17.2" stroke="#111" stroke-width="2.0" stroke-linecap="round" stroke-linejoin="round"/></svg>
<div style="position:absolute;left:235.11px;top:966.87px;font-size:22.9px;line-height:22.9px;font-weight:400;color:#111;white-space:nowrap;transform:scaleX(0.9953);transform-origin:0 0;">Homenick, Marie - 1021</div>
<div style="position:absolute;left:181px;top:1004.28px;width:435px;height:1px;background:#d5d5d5"></div>
<svg style="position:absolute;left:196px;top:1016px;" width="26" height="26" viewBox="0 0 26 26" fill="none"><circle cx="11.5" cy="7.2" r="4.2" stroke="#111" stroke-width="2.0"/><path d="M4.4 23.4 V20 Q4.4 16.6 7.8 16.6 H14.6" stroke="#111" stroke-width="2.0" stroke-linecap="round"/><path d="M14.6 19.8 L17.6 22.6 L23.2 17.2" stroke="#111" stroke-width="2.0" stroke-linecap="round" stroke-linejoin="round"/></svg>
<div style="position:absolute;left:235.11px;top:1021.61px;font-size:22.9px;line-height:22.9px;font-weight:400;color:#111;white-space:nowrap;transform:scaleX(0.9953);transform-origin:0 0;">Koss, Aubrey - 1237</div>
<div style="position:absolute;left:181px;top:1059.02px;width:435px;height:1px;background:#d5d5d5"></div>
<svg style="position:absolute;left:196px;top:1071px;" width="26" height="26" viewBox="0 0 26 26" fill="none"><circle cx="11.5" cy="7.2" r="4.2" stroke="#111" stroke-width="2.0"/><path d="M4.4 23.4 V20 Q4.4 16.6 7.8 16.6 H14.6" stroke="#111" stroke-width="2.0" stroke-linecap="round"/><path d="M14.6 19.8 L17.6 22.6 L23.2 17.2" stroke="#111" stroke-width="2.0" stroke-linecap="round" stroke-linejoin="round"/></svg>
<div style="position:absolute;left:235.11px;top:1076.36px;font-size:22.9px;line-height:22.9px;font-weight:400;color:#111;white-space:nowrap;transform:scaleX(0.9953);transform-origin:0 0;">Labadie, Jan - 1099</div>
<div style="position:absolute;left:181px;top:1113.76px;width:435px;height:1px;background:#d5d5d5"></div>
<svg style="position:absolute;left:196px;top:1126px;" width="26" height="26" viewBox="0 0 26 26" fill="none"><circle cx="11.5" cy="7.2" r="4.2" stroke="#111" stroke-width="2.0"/><path d="M4.4 23.4 V20 Q4.4 16.6 7.8 16.6 H14.6" stroke="#111" stroke-width="2.0" stroke-linecap="round"/><path d="M14.6 19.8 L17.6 22.6 L23.2 17.2" stroke="#111" stroke-width="2.0" stroke-linecap="round" stroke-linejoin="round"/></svg>
<div style="position:absolute;left:235.11px;top:1131.10px;font-size:22.9px;line-height:22.9px;font-weight:400;color:#111;white-space:nowrap;transform:scaleX(0.9953);transform-origin:0 0;">McGlynn, Leslie - 1069</div>
<div style="position:absolute;left:181px;top:1168.50px;width:435px;height:1px;background:#d5d5d5"></div>
<svg style="position:absolute;left:196px;top:1180px;" width="26" height="26" viewBox="0 0 26 26" fill="none"><circle cx="11.5" cy="7.2" r="4.2" stroke="#111" stroke-width="2.0"/><path d="M4.4 23.4 V20 Q4.4 16.6 7.8 16.6 H14.6" stroke="#111" stroke-width="2.0" stroke-linecap="round"/><path d="M14.6 19.8 L17.6 22.6 L23.2 17.2" stroke="#111" stroke-width="2.0" stroke-linecap="round" stroke-linejoin="round"/></svg>
<div style="position:absolute;left:235.11px;top:1185.84px;font-size:22.9px;line-height:22.9px;font-weight:400;color:#111;white-space:nowrap;transform:scaleX(0.9953);transform-origin:0 0;">McLaughlin, Sabrina - 1249</div>
<div style="position:absolute;left:181px;top:1223.24px;width:435px;height:1px;background:#d5d5d5"></div>
<svg style="position:absolute;left:196px;top:1235px;" width="26" height="26" viewBox="0 0 26 26" fill="none"><circle cx="11.5" cy="7.2" r="4.2" stroke="#111" stroke-width="2.0"/><path d="M4.4 23.4 V20 Q4.4 16.6 7.8 16.6 H14.6" stroke="#111" stroke-width="2.0" stroke-linecap="round"/><path d="M14.6 19.8 L17.6 22.6 L23.2 17.2" stroke="#111" stroke-width="2.0" stroke-linecap="round" stroke-linejoin="round"/></svg>
<div style="position:absolute;left:235.11px;top:1240.58px;font-size:22.9px;line-height:22.9px;font-weight:400;color:#111;white-space:nowrap;transform:scaleX(0.9953);transform-origin:0 0;">Monahan, Lorene - 1147</div>
<div style="position:absolute;left:181px;top:1277.98px;width:435px;height:1px;background:#d5d5d5"></div>
<svg style="position:absolute;left:196px;top:1290px;" width="26" height="26" viewBox="0 0 26 26" fill="none"><circle cx="11.5" cy="7.2" r="4.2" stroke="#111" stroke-width="2.0"/><path d="M4.4 23.4 V20 Q4.4 16.6 7.8 16.6 H14.6" stroke="#111" stroke-width="2.0" stroke-linecap="round"/><path d="M14.6 19.8 L17.6 22.6 L23.2 17.2" stroke="#111" stroke-width="2.0" stroke-linecap="round" stroke-linejoin="round"/></svg>
<div style="position:absolute;left:235.11px;top:1295.32px;font-size:22.9px;line-height:22.9px;font-weight:400;color:#111;white-space:nowrap;transform:scaleX(0.9953);transform-origin:0 0;">Mosciski, Betsy - 1219</div>
<div style="position:absolute;left:181px;top:1332.72px;width:435px;height:1px;background:#d5d5d5"></div>
<svg style="position:absolute;left:196px;top:1345px;" width="26" height="26" viewBox="0 0 26 26" fill="none"><circle cx="11.5" cy="7.2" r="4.2" stroke="#111" stroke-width="2.0"/><path d="M4.4 23.4 V20 Q4.4 16.6 7.8 16.6 H14.6" stroke="#111" stroke-width="2.0" stroke-linecap="round"/><path d="M14.6 19.8 L17.6 22.6 L23.2 17.2" stroke="#111" stroke-width="2.0" stroke-linecap="round" stroke-linejoin="round"/></svg>
<div style="position:absolute;left:235.11px;top:1350.06px;font-size:22.9px;line-height:22.9px;font-weight:400;color:#111;white-space:nowrap;transform:scaleX(0.9953);transform-origin:0 0;">Mraz, Karl - 1213</div>
<div style="position:absolute;left:181px;top:1387.46px;width:435px;height:1px;background:#d5d5d5"></div>
<svg style="position:absolute;left:196px;top:1399px;" width="26" height="26" viewBox="0 0 26 26" fill="none"><circle cx="11.5" cy="7.2" r="4.2" stroke="#111" stroke-width="2.0"/><path d="M4.4 23.4 V20 Q4.4 16.6 7.8 16.6 H14.6" stroke="#111" stroke-width="2.0" stroke-linecap="round"/><path d="M14.6 19.8 L17.6 22.6 L23.2 17.2" stroke="#111" stroke-width="2.0" stroke-linecap="round" stroke-linejoin="round"/></svg>
<div style="position:absolute;left:235.11px;top:1404.80px;font-size:22.9px;line-height:22.9px;font-weight:400;color:#111;white-space:nowrap;transform:scaleX(0.9953);transform-origin:0 0;">Nicolas, Ernesto - 1159</div>
<div style="position:absolute;left:610px;top:187px;width:6px;height:306px;background:#9e9e9e;border-radius:3px 3px 0 0;"></div>
<div style="position:absolute;left:628px;top:256px;width:1816px;height:49px;background:#62a0e4;"></div>
<div style="position:absolute;left:625px;top:253px;width:1822px;height:3px;background:#0c59a8;"></div>
<div style="position:absolute;left:625px;top:732px;width:1822px;height:3px;background:#0c59a8;"></div>
<div style="position:absolute;left:625px;top:253px;width:3px;height:482px;background:#0c59a8;"></div>
<div style="position:absolute;left:2444px;top:253px;width:3px;height:482px;background:#0c59a8;"></div>
<div style="position:absolute;left:628px;top:305px;width:1816px;height:2px;background:#0c59a8;"></div>
<div style="position:absolute;left:628px;top:358px;width:1816px;height:2px;background:#0c59a8;"></div>
<div style="position:absolute;left:628px;top:411px;width:1816px;height:2px;background:#0c59a8;"></div>
<div style="position:absolute;left:628px;top:464px;width:1816px;height:2px;background:#0c59a8;"></div>
<div style="position:absolute;left:628px;top:516px;width:1816px;height:2px;background:#0c59a8;"></div>
<div style="position:absolute;left:628px;top:569px;width:1816px;height:2px;background:#0c59a8;"></div>
<div style="position:absolute;left:628px;top:650px;width:1816px;height:2px;background:#0c59a8;"></div>
<div style="position:absolute;left:809px;top:256px;width:2px;height:476px;background:#0c59a8;"></div>
<div style="position:absolute;left:1007px;top:256px;width:2px;height:476px;background:#0c59a8;"></div>
<div style="position:absolute;left:1205px;top:256px;width:2px;height:476px;background:#0c59a8;"></div>
<div style="position:absolute;left:1442px;top:256px;width:2px;height:476px;background:#0c59a8;"></div>
<div style="position:absolute;left:1918px;top:256px;width:2px;height:476px;background:#0c59a8;"></div>
<div style="position:absolute;left:670.37px;top:269.94px;font-size:22.9px;line-height:22.9px;font-weight:700;color:#fff;white-space:nowrap;transform:scaleX(0.9924);transform-origin:0 0;">Pay Date</div>
<div style="position:absolute;left:899.08px;top:269.94px;font-size:22.9px;line-height:22.9px;font-weight:700;color:#fff;white-space:nowrap;transform:scaleX(0.9924);transform-origin:0 0;">In</div>
<div style="position:absolute;left:1087.15px;top:269.94px;font-size:22.9px;line-height:22.9px;font-weight:700;color:#fff;white-space:nowrap;transform:scaleX(0.9924);transform-origin:0 0;">Out</div>
<div style="position:absolute;left:1291.26px;top:269.94px;font-size:22.9px;line-height:22.9px;font-weight:700;color:#fff;white-space:nowrap;transform:scaleX(0.9924);transform-origin:0 0;">Hours</div>
<div style="position:absolute;left:1619.97px;top:269.94px;font-size:22.9px;line-height:22.9px;font-weight:700;color:#fff;white-space:nowrap;transform:scaleX(0.9924);transform-origin:0 0;">Exceptions</div>
<div style="position:absolute;left:2113.03px;top:269.94px;font-size:22.9px;line-height:22.9px;font-weight:700;color:#fff;white-space:nowrap;transform:scaleX(0.9924);transform-origin:0 0;">Adjustments</div>
<div style="position:absolute;left:639.86px;top:321.84px;font-size:22.9px;line-height:22.9px;font-weight:400;color:#111;white-space:nowrap;transform:scaleX(0.9359);transform-origin:0 0;">Sun</div>
<div style="position:absolute;left:702.85px;top:321.84px;font-size:22.9px;line-height:22.9px;font-weight:400;color:#111;white-space:nowrap;transform:scaleX(1.0460);transform-origin:0 0;">06/29/25</div>
<div style="position:absolute;left:861.35px;top:321.84px;font-size:22.9px;line-height:22.9px;font-weight:400;color:#111;white-space:nowrap;transform:scaleX(0.9825);transform-origin:0 0;">02:50 PM</div>
<div style="position:absolute;left:1059.35px;top:321.84px;font-size:22.9px;line-height:22.9px;font-weight:400;color:#111;white-space:nowrap;transform:scaleX(0.9825);transform-origin:0 0;">11:00 PM</div>
<div style="position:absolute;left:1225.46px;top:320.84px;font-size:22.9px;line-height:22.9px;font-weight:400;color:#111;white-space:nowrap;transform:scaleX(0.9432);transform-origin:0 0;">REG 7.00 - DIF 7.00</div>
<div style="position:absolute;left:1539.80px;top:320.84px;font-size:22.9px;line-height:22.9px;font-weight:400;color:#111;white-space:nowrap;transform:scaleX(0.9874);transform-origin:0 0;">Early In 10 - Short Lunch 60</div>
<div style="position:absolute;left:2453px;top:313px;width:38px;height:38px;box-sizing:border-box;border:1px solid #cfcfcf;background:#fff;border-radius:8px;"></div>
<div style="position:absolute;left:2462.42px;top:322.85px;font-size:17px;line-height:17px;font-weight:700;color:#333;white-space:nowrap;transform:scaleX(0.8500);transform-origin:0 0;">{+}</div>
<div style="position:absolute;left:638.53px;top:374.84px;font-size:22.9px;line-height:22.9px;font-weight:400;color:#111;white-space:nowrap;transform:scaleX(1.0829);transform-origin:0 0;">Mon</div>
<div style="position:absolute;left:702.85px;top:374.84px;font-size:22.9px;line-height:22.9px;font-weight:400;color:#111;white-space:nowrap;transform:scaleX(1.0460);transform-origin:0 0;">06/30/25</div>
<svg style="position:absolute;left:896.7px;top:371.4px;" width="24" height="24" viewBox="0 0 24 24" fill="none"><path d="M20.5 12 A8.5 8.5 0 1 0 12.9 20.45" stroke="#222" stroke-width="1.7" stroke-linecap="round"/><path d="M12 6.4 V12.5 L15.4 15.6" stroke="#222" stroke-width="1.7" stroke-linecap="round" stroke-linejoin="round"/><path d="M15.1 18.4 H22.3 M18.7 14.8 V22" stroke="#222" stroke-width="1.7" stroke-linecap="round"/></svg>
<svg style="position:absolute;left:1094.7px;top:371.4px;" width="24" height="24" viewBox="0 0 24 24" fill="none"><path d="M20.5 12 A8.5 8.5 0 1 0 12.9 20.45" stroke="#222" stroke-width="1.7" stroke-linecap="round"/><path d="M12 6.4 V12.5 L15.4 15.6" stroke="#222" stroke-width="1.7" stroke-linecap="round" stroke-linejoin="round"/><path d="M15.1 18.4 H22.3 M18.7 14.8 V22" stroke="#222" stroke-width="1.7" stroke-linecap="round"/></svg>
<div style="position:absolute;left:2453px;top:366px;width:38px;height:38px;box-sizing:border-box;border:1px solid #cfcfcf;background:#fff;border-radius:8px;"></div>
<div style="position:absolute;left:2462.42px;top:375.85px;font-size:17px;line-height:17px;font-weight:700;color:#333;white-space:nowrap;transform:scaleX(0.8500);transform-origin:0 0;">{+}</div>
<div style="position:absolute;left:641.20px;top:427.84px;font-size:22.9px;line-height:22.9px;font-weight:400;color:#111;white-space:nowrap;transform:scaleX(0.9579);transform-origin:0 0;">Tue</div>
<div style="position:absolute;left:702.85px;top:427.84px;font-size:22.9px;line-height:22.9px;font-weight:400;color:#111;white-space:nowrap;transform:scaleX(1.0460);transform-origin:0 0;">07/01/25</div>
<div style="position:absolute;left:861.35px;top:427.84px;font-size:22.9px;line-height:22.9px;font-weight:400;color:#111;white-space:nowrap;transform:scaleX(0.9825);transform-origin:0 0;">03:07 PM</div>
<div style="position:absolute;left:1059.35px;top:427.84px;font-size:22.9px;line-height:22.9px;font-weight:400;color:#111;white-space:nowrap;transform:scaleX(0.9825);transform-origin:0 0;">11:00 PM</div>
<div style="position:absolute;left:1225.46px;top:426.84px;font-size:22.9px;line-height:22.9px;font-weight:400;color:#111;white-space:nowrap;transform:scaleX(0.9432);transform-origin:0 0;">REG 7.00 - DIF 7.00</div>
<div style="position:absolute;left:1603.98px;top:426.84px;font-size:22.9px;line-height:22.9px;font-weight:400;color:#111;white-space:nowrap;transform:scaleX(0.9874);transform-origin:0 0;">Short Lunch 60</div>
<div style="position:absolute;left:2453px;top:419px;width:38px;height:38px;box-sizing:border-box;border:1px solid #cfcfcf;background:#fff;border-radius:8px;"></div>
<div style="position:absolute;left:2462.42px;top:428.85px;font-size:17px;line-height:17px;font-weight:700;color:#333;white-space:nowrap;transform:scaleX(0.8500);transform-origin:0 0;">{+}</div>
<div style="position:absolute;left:639.30px;top:480.54px;font-size:22.9px;line-height:22.9px;font-weight:400;color:#111;white-space:nowrap;transform:scaleX(1.0089);transform-origin:0 0;">Wed</div>
<div style="position:absolute;left:702.85px;top:480.54px;font-size:22.9px;line-height:22.9px;font-weight:400;color:#111;white-space:nowrap;transform:scaleX(1.0460);transform-origin:0 0;">07/02/25</div>
<div style="position:absolute;left:861.35px;top:480.54px;font-size:22.9px;line-height:22.9px;font-weight:400;color:#111;white-space:nowrap;transform:scaleX(0.9825);transform-origin:0 0;">03:02 PM</div>
<div style="position:absolute;left:1058.86px;top:480.54px;font-size:22.9px;line-height:22.9px;font-weight:400;color:#111;white-space:nowrap;transform:scaleX(0.9825);transform-origin:0 0;">10:59 PM</div>
<div style="position:absolute;left:1225.46px;top:479.54px;font-size:22.9px;line-height:22.9px;font-weight:400;color:#111;white-space:nowrap;transform:scaleX(0.9432);transform-origin:0 0;">REG 7.00 - DIF 7.00</div>
<div style="position:absolute;left:1603.98px;top:479.54px;font-size:22.9px;line-height:22.9px;font-weight:400;color:#111;white-space:nowrap;transform:scaleX(0.9874);transform-origin:0 0;">Short Lunch 60</div>
<div style="position:absolute;left:2453px;top:472px;width:38px;height:38px;box-sizing:border-box;border:1px solid #cfcfcf;background:#fff;border-radius:8px;"></div>
<div style="position:absolute;left:2462.42px;top:481.55px;font-size:17px;line-height:17px;font-weight:700;color:#333;white-space:nowrap;transform:scaleX(0.8500);transform-origin:0 0;">{+}</div>
<div style="position:absolute;left:640.80px;top:532.83px;font-size:22.9px;line-height:22.9px;font-weight:400;color:#111;white-space:nowrap;transform:scaleX(0.9553);transform-origin:0 0;">Thu</div>
<div style="position:absolute;left:702.85px;top:532.83px;font-size:22.9px;line-height:22.9px;font-weight:400;color:#111;white-space:nowrap;transform:scaleX(1.0460);transform-origin:0 0;">07/03/25</div>
<div style="position:absolute;left:861.35px;top:532.83px;font-size:22.9px;line-height:22.9px;font-weight:400;color:#111;white-space:nowrap;transform:scaleX(0.9825);transform-origin:0 0;">02:58 PM</div>
<div style="position:absolute;left:1059.35px;top:532.83px;font-size:22.9px;line-height:22.9px;font-weight:400;color:#111;white-space:nowrap;transform:scaleX(0.9825);transform-origin:0 0;">11:02 PM</div>
<div style="position:absolute;left:1225.46px;top:531.83px;font-size:22.9px;line-height:22.9px;font-weight:400;color:#111;white-space:nowrap;transform:scaleX(0.9432);transform-origin:0 0;">REG 7.00 - DIF 7.00</div>
<div style="position:absolute;left:1603.98px;top:531.83px;font-size:22.9px;line-height:22.9px;font-weight:400;color:#111;white-space:nowrap;transform:scaleX(0.9874);transform-origin:0 0;">Short Lunch 60</div>
<div style="position:absolute;left:2453px;top:524px;width:38px;height:38px;box-sizing:border-box;border:1px solid #cfcfcf;background:#fff;border-radius:8px;"></div>
<div style="position:absolute;left:2462.42px;top:533.85px;font-size:17px;line-height:17px;font-weight:700;color:#333;white-space:nowrap;transform:scaleX(0.8500);transform-origin:0 0;">{+}</div>
<div style="position:absolute;left:645.80px;top:585.53px;font-size:22.9px;line-height:22.9px;font-weight:400;color:#111;white-space:nowrap;">Fri</div>
<div style="position:absolute;left:702.85px;top:585.53px;font-size:22.9px;line-height:22.9px;font-weight:400;color:#111;white-space:nowrap;transform:scaleX(1.0460);transform-origin:0 0;">07/04/25</div>
<div style="position:absolute;left:861.35px;top:585.53px;font-size:22.9px;line-height:22.9px;font-weight:400;color:#111;white-space:nowrap;transform:scaleX(0.9825);transform-origin:0 0;">02:50 PM</div>
<div style="position:absolute;left:1059.35px;top:585.53px;font-size:22.9px;line-height:22.9px;font-weight:400;color:#111;white-space:nowrap;transform:scaleX(0.9825);transform-origin:0 0;">11:05 PM</div>
<div style="position:absolute;left:1221.69px;top:584.53px;font-size:22.9px;line-height:22.9px;font-weight:400;color:#111;white-space:nowrap;transform:scaleX(0.9432);transform-origin:0 0;">HOT 7.00 - HOL 7.00</div>
<div style="position:absolute;left:1276.40px;top:617.24px;font-size:22.9px;line-height:22.9px;font-weight:400;color:#111;white-space:nowrap;transform:scaleX(0.9432);transform-origin:0 0;">- DIF 7.00</div>
<div style="position:absolute;left:1539.80px;top:584.53px;font-size:22.9px;line-height:22.9px;font-weight:400;color:#111;white-space:nowrap;transform:scaleX(0.9874);transform-origin:0 0;">Early In 10 - Short Lunch 60</div>
<div style="position:absolute;left:2453px;top:577px;width:38px;height:38px;box-sizing:border-box;border:1px solid #cfcfcf;background:#fff;border-radius:8px;"></div>
<div style="position:absolute;left:2462.42px;top:586.55px;font-size:17px;line-height:17px;font-weight:700;color:#333;white-space:nowrap;transform:scaleX(0.8500);transform-origin:0 0;">{+}</div>
<div style="position:absolute;left:643.06px;top:666.73px;font-size:22.9px;line-height:22.9px;font-weight:400;color:#111;white-space:nowrap;transform:scaleX(0.9394);transform-origin:0 0;">Sat</div>
<div style="position:absolute;left:702.85px;top:666.73px;font-size:22.9px;line-height:22.9px;font-weight:400;color:#111;white-space:nowrap;transform:scaleX(1.0460);transform-origin:0 0;">07/05/25</div>
<div style="position:absolute;left:861.35px;top:666.73px;font-size:22.9px;line-height:22.9px;font-weight:400;color:#111;white-space:nowrap;transform:scaleX(0.9825);transform-origin:0 0;">02:52 PM</div>
<div style="position:absolute;left:1058.86px;top:666.73px;font-size:22.9px;line-height:22.9px;font-weight:400;color:#111;white-space:nowrap;transform:scaleX(0.9825);transform-origin:0 0;">10:54 PM</div>
<div style="position:absolute;left:1221.69px;top:665.73px;font-size:22.9px;line-height:22.9px;font-weight:400;color:#111;white-space:nowrap;transform:scaleX(0.9432);transform-origin:0 0;">REG 5.00 - OT 2.00 -</div>
<div style="position:absolute;left:1282.53px;top:698.43px;font-size:22.9px;line-height:22.9px;font-weight:400;color:#111;white-space:nowrap;transform:scaleX(0.9432);transform-origin:0 0;">DIF 7.00</div>
<div style="position:absolute;left:1545.72px;top:665.73px;font-size:22.9px;line-height:22.9px;font-weight:400;color:#111;white-space:nowrap;transform:scaleX(0.9874);transform-origin:0 0;">Early In 8 - Short Lunch 60</div>
<div style="position:absolute;left:2453px;top:658px;width:38px;height:38px;box-sizing:border-box;border:1px solid #cfcfcf;background:#fff;border-radius:8px;"></div>
<div style="position:absolute;left:2462.42px;top:667.75px;font-size:17px;line-height:17px;font-weight:700;color:#333;white-space:nowrap;transform:scaleX(0.8500);transform-origin:0 0;">{+}</div>
<div style="position:absolute;left:628px;top:774px;width:498px;height:48px;background:#62a0e4;"></div>
<div style="position:absolute;left:625px;top:771px;width:503px;height:3px;background:#0c59a8;"></div>
<div style="position:absolute;left:625px;top:979px;width:502px;height:3px;background:#0c59a8;"></div>
<div style="position:absolute;left:625px;top:771px;width:3px;height:211px;background:#0c59a8;"></div>
<div style="position:absolute;left:1124px;top:929px;width:3px;height:53px;background:#0c59a8;"></div>
<div style="position:absolute;left:628px;top:822px;width:498px;height:2px;background:#0c59a8;"></div>
<div style="position:absolute;left:628px;top:876px;width:498px;height:2px;background:#0c59a8;"></div>
<div style="position:absolute;left:628px;top:928px;width:498px;height:2px;background:#0c59a8;"></div>
<div style="position:absolute;left:809px;top:774px;width:2px;height:205px;background:#0c59a8;"></div>
<div style="position:absolute;left:967px;top:774px;width:2px;height:205px;background:#0c59a8;"></div>
<div style="position:absolute;left:670.37px;top:787.33px;font-size:22.9px;line-height:22.9px;font-weight:700;color:#fff;white-space:nowrap;transform:scaleX(0.9924);transform-origin:0 0;">Pay Date</div>
<div style="position:absolute;left:836.90px;top:787.33px;font-size:22.9px;line-height:22.9px;font-weight:700;color:#fff;white-space:nowrap;transform:scaleX(0.9924);transform-origin:0 0;">Pay Code</div>
<div style="position:absolute;left:1013.26px;top:787.33px;font-size:22.9px;line-height:22.9px;font-weight:700;color:#fff;white-space:nowrap;transform:scaleX(0.9924);transform-origin:0 0;">Hours</div>
<div style="position:absolute;left:649.02px;top:837.83px;font-size:22.9px;line-height:22.9px;font-weight:400;color:#111;white-space:nowrap;transform:scaleX(1.0218);transform-origin:0 0;">Sun 06/29/25</div>
<div style="position:absolute;left:864.44px;top:837.83px;font-size:22.9px;line-height:22.9px;font-weight:400;color:#111;white-space:nowrap;transform:scaleX(0.9825);transform-origin:0 0;">REG</div>
<div style="position:absolute;left:1028.89px;top:838.83px;font-size:22.9px;line-height:22.9px;font-weight:400;color:#111;white-space:nowrap;transform:scaleX(0.9825);transform-origin:0 0;">7.00</div>
<div style="position:absolute;left:649.02px;top:891.83px;font-size:22.9px;line-height:22.9px;font-weight:400;color:#111;white-space:nowrap;transform:scaleX(1.0218);transform-origin:0 0;">Sun 06/29/25</div>
<div style="position:absolute;left:870.33px;top:891.83px;font-size:22.9px;line-height:22.9px;font-weight:400;color:#111;white-space:nowrap;transform:scaleX(0.9825);transform-origin:0 0;">DIF</div>
<div style="position:absolute;left:1028.89px;top:892.83px;font-size:22.9px;line-height:22.9px;font-weight:400;color:#111;white-space:nowrap;transform:scaleX(0.9825);transform-origin:0 0;">7.00</div>
<div style="position:absolute;left:644.25px;top:943.83px;font-size:22.9px;line-height:22.9px;font-weight:700;color:#111;white-space:nowrap;transform:scaleX(1.0611);transform-origin:0 0;">Sun 06/29/25</div>
<div style="position:absolute;left:854.10px;top:943.83px;font-size:22.9px;line-height:22.9px;font-weight:700;color:#111;white-space:nowrap;transform:scaleX(0.9432);transform-origin:0 0;">TOTAL</div>
<div style="position:absolute;left:1023.15px;top:943.83px;font-size:22.9px;line-height:22.9px;font-weight:700;color:#111;white-space:nowrap;transform:scaleX(1.0513);transform-origin:0 0;">7.00</div>
<div style="position:absolute;left:1128px;top:774px;width:471px;height:48px;background:#62a0e4;"></div>
<div style="position:absolute;left:1128px;top:824px;width:471px;height:102px;background:#fff;"></div>
<div style="position:absolute;left:1126px;top:771px;width:476px;height:3px;background:#0c59a8;"></div>
<div style="position:absolute;left:1126px;top:926px;width:476px;height:3px;background:#0c59a8;"></div>
<div style="position:absolute;left:1126px;top:771px;width:2px;height:158px;background:#0c59a8;"></div>
<div style="position:absolute;left:1599px;top:771px;width:3px;height:158px;background:#0c59a8;"></div>
<div style="position:absolute;left:1128px;top:822px;width:471px;height:2px;background:#0c59a8;"></div>
<div style="position:absolute;left:1128px;top:874px;width:471px;height:3px;background:#0c59a8;"></div>
<div style="position:absolute;left:1284px;top:774px;width:2px;height:152px;background:#0c59a8;"></div>
<div style="position:absolute;left:1442px;top:774px;width:2px;height:152px;background:#0c59a8;"></div>
<div style="position:absolute;left:1150.85px;top:787.33px;font-size:22.9px;line-height:22.9px;font-weight:700;color:#fff;white-space:nowrap;transform:scaleX(1.0120);transform-origin:0 0;">Shift Type</div>
<div style="position:absolute;left:1317.33px;top:787.33px;font-size:22.9px;line-height:22.9px;font-weight:700;color:#fff;white-space:nowrap;transform:scaleX(0.9825);transform-origin:0 0;">Location</div>
<div style="position:absolute;left:1455.47px;top:787.33px;font-size:22.9px;line-height:22.9px;font-weight:700;color:#fff;white-space:nowrap;transform:scaleX(1.0317);transform-origin:0 0;">Department</div>
<div style="position:absolute;left:1163.19px;top:837.83px;font-size:22.9px;line-height:22.9px;font-weight:400;color:#111;white-space:nowrap;transform:scaleX(1.0317);transform-origin:0 0;">Evening</div>
<div style="position:absolute;left:1356.63px;top:837.83px;font-size:22.9px;line-height:22.9px;font-weight:400;color:#111;white-space:nowrap;transform:scaleX(0.9825);transform-origin:0 0;">A</div>
<div style="position:absolute;left:1501.38px;top:837.83px;font-size:22.9px;line-height:22.9px;font-weight:400;color:#111;white-space:nowrap;transform:scaleX(1.0317);transform-origin:0 0;">200</div>
<div style="position:absolute;left:1163.19px;top:890.33px;font-size:22.9px;line-height:22.9px;font-weight:400;color:#111;white-space:nowrap;transform:scaleX(1.0317);transform-origin:0 0;">Evening</div>
<div style="position:absolute;left:1356.63px;top:890.33px;font-size:22.9px;line-height:22.9px;font-weight:400;color:#111;white-space:nowrap;transform:scaleX(0.9825);transform-origin:0 0;">A</div>
<div style="position:absolute;left:1501.38px;top:890.33px;font-size:22.9px;line-height:22.9px;font-weight:400;color:#111;white-space:nowrap;transform:scaleX(1.0317);transform-origin:0 0;">200</div>
<div style="position:absolute;left:628px;top:1021px;width:337px;height:49px;background:#62a0e4;"></div>
<div style="position:absolute;left:625px;top:1018px;width:343px;height:3px;background:#0c59a8;"></div>
<div style="position:absolute;left:625px;top:1385px;width:343px;height:3px;background:#0c59a8;"></div>
<div style="position:absolute;left:625px;top:1018px;width:3px;height:370px;background:#0c59a8;"></div>
<div style="position:absolute;left:965px;top:1018px;width:3px;height:370px;background:#0c59a8;"></div>
<div style="position:absolute;left:628px;top:1070px;width:337px;height:2px;background:#0c59a8;"></div>
<div style="position:absolute;left:628px;top:1123px;width:337px;height:2px;background:#0c59a8;"></div>
<div style="position:absolute;left:628px;top:1176px;width:337px;height:2px;background:#0c59a8;"></div>
<div style="position:absolute;left:628px;top:1229px;width:337px;height:2px;background:#0c59a8;"></div>
<div style="position:absolute;left:628px;top:1281px;width:337px;height:2px;background:#0c59a8;"></div>
<div style="position:absolute;left:628px;top:1334px;width:337px;height:2px;background:#0c59a8;"></div>
<div style="position:absolute;left:809px;top:1021px;width:2px;height:364px;background:#0c59a8;"></div>
<div style="position:absolute;left:666.40px;top:1034.34px;font-size:22.9px;line-height:22.9px;font-weight:700;color:#fff;white-space:nowrap;transform:scaleX(0.9924);transform-origin:0 0;">Pay Code</div>
<div style="position:absolute;left:854.76px;top:1034.34px;font-size:22.9px;line-height:22.9px;font-weight:700;color:#fff;white-space:nowrap;transform:scaleX(0.9924);transform-origin:0 0;">Hours</div>
<div style="position:absolute;left:695.90px;top:1086.34px;font-size:22.9px;line-height:22.9px;font-weight:400;color:#111;white-space:nowrap;transform:scaleX(0.9039);transform-origin:0 0;">REG</div>
<div style="position:absolute;left:859.51px;top:1086.34px;font-size:22.9px;line-height:22.9px;font-weight:400;color:#111;white-space:nowrap;transform:scaleX(0.9825);transform-origin:0 0;">33.00</div>
<div style="position:absolute;left:704.04px;top:1139.34px;font-size:22.9px;line-height:22.9px;font-weight:400;color:#111;white-space:nowrap;transform:scaleX(0.9039);transform-origin:0 0;">OT</div>
<div style="position:absolute;left:865.89px;top:1139.34px;font-size:22.9px;line-height:22.9px;font-weight:400;color:#111;white-space:nowrap;transform:scaleX(0.9825);transform-origin:0 0;">2.00</div>
<div style="position:absolute;left:695.90px;top:1192.34px;font-size:22.9px;line-height:22.9px;font-weight:400;color:#111;white-space:nowrap;transform:scaleX(0.9039);transform-origin:0 0;">HOT</div>
<div style="position:absolute;left:865.89px;top:1192.34px;font-size:22.9px;line-height:22.9px;font-weight:400;color:#111;white-space:nowrap;transform:scaleX(0.9825);transform-origin:0 0;">7.00</div>
<div style="position:absolute;left:696.81px;top:1245.34px;font-size:22.9px;line-height:22.9px;font-weight:400;color:#111;white-space:nowrap;transform:scaleX(0.9039);transform-origin:0 0;">HOL</div>
<div style="position:absolute;left:865.89px;top:1245.34px;font-size:22.9px;line-height:22.9px;font-weight:400;color:#111;white-space:nowrap;transform:scaleX(0.9825);transform-origin:0 0;">7.00</div>
<div style="position:absolute;left:701.33px;top:1297.34px;font-size:22.9px;line-height:22.9px;font-weight:400;color:#111;white-space:nowrap;transform:scaleX(0.9039);transform-origin:0 0;">DIF</div>
<div style="position:absolute;left:860.00px;top:1297.34px;font-size:22.9px;line-height:22.9px;font-weight:400;color:#111;white-space:nowrap;transform:scaleX(0.9825);transform-origin:0 0;">42.00</div>
<div style="position:absolute;left:683.90px;top:1350.34px;font-size:22.9px;line-height:22.9px;font-weight:700;color:#111;white-space:nowrap;transform:scaleX(0.9432);transform-origin:0 0;">TOTAL</div>
<div style="position:absolute;left:857.76px;top:1350.34px;font-size:22.9px;line-height:22.9px;font-weight:700;color:#111;white-space:nowrap;transform:scaleX(1.0611);transform-origin:0 0;">49.00</div>
</body></html>
